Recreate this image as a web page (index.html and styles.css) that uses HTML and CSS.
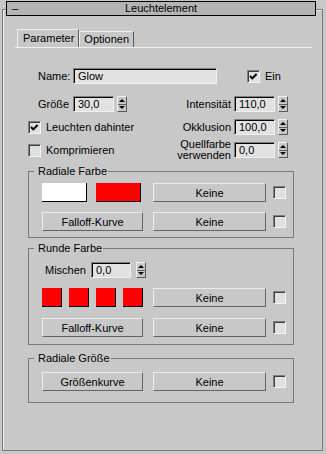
FILE: index.html
```html
<!DOCTYPE html>
<html lang="de">
<head>
<meta charset="UTF-8">
<title>Leuchtelement</title>
<link rel="stylesheet" href="styles.css">
</head>
<body>

<div class="panel">

<div class="titlebar"><span class="minus">–</span><span>Leuchtelement</span><span></span></div>

<div class="tabs">
<div class="tab active">Parameter</div>
<div class="tab">Optionen</div>
</div>

<div class="row r-name">
<span class="lbl">Name:</span>
<span class="field wide">Glow</span>
<span class="check on ein"><svg viewBox="0 0 11 11" width="11" height="11"><path d="M2 5 L4.3 7.4 L8.6 3" stroke="#000" stroke-width="2" fill="none"/></svg></span>
<span class="cap">Ein</span>
</div>

<div class="row r1">
<div class="left">
<span class="lbl">Größe</span>
<span class="field">30,0</span>
<span class="spin"><i class="up"></i><i class="down"></i></span>
</div>
<div class="right">
<span class="rlbl">Intensität</span>
<span class="field">110,0</span>
<span class="spin"><i class="up"></i><i class="down"></i></span>
</div>
</div>

<div class="row r2">
<div class="left chk">
<span class="check on"><svg viewBox="0 0 11 11" width="11" height="11"><path d="M2 5 L4.3 7.4 L8.6 3" stroke="#000" stroke-width="2" fill="none"/></svg></span>
<span class="cap">Leuchten dahinter</span>
</div>
<div class="right">
<span class="rlbl">Okklusion</span>
<span class="field">100,0</span>
<span class="spin"><i class="up"></i><i class="down"></i></span>
</div>
</div>

<div class="row r2">
<div class="left chk">
<span class="check"></span>
<span class="cap">Komprimieren</span>
</div>
<div class="right">
<span class="rlbl">Quellfarbe<br>verwenden</span>
<span class="field">0,0</span>
<span class="spin"><i class="up"></i><i class="down"></i></span>
</div>
</div>

<div class="group g1">
<div class="gtitle">Radiale Farbe</div>
<div class="grow first">
<span class="sw big white"></span>
<span class="sw big"></span>
<span class="btn keine">Keine</span>
<span class="check"></span>
</div>
<div class="grow second">
<span class="btn curve">Falloff-Kurve</span>
<span class="btn keine">Keine</span>
<span class="check"></span>
</div>
</div>

<div class="group g2">
<div class="gtitle">Runde Farbe</div>
<div class="grow mix">
<span class="mlbl">Mischen</span>
<span class="field narrow">0,0</span>
<span class="spin wide-gap"><i class="up"></i><i class="down"></i></span>
</div>
<div class="grow swatches">
<span class="sw"></span>
<span class="sw"></span>
<span class="sw"></span>
<span class="sw"></span>
<span class="btn keine">Keine</span>
<span class="check"></span>
</div>
<div class="grow third">
<span class="btn curve">Falloff-Kurve</span>
<span class="btn keine">Keine</span>
<span class="check"></span>
</div>
</div>

<div class="group g3">
<div class="gtitle">Radiale Größe</div>
<div class="grow size">
<span class="btn curve">Größenkurve</span>
<span class="btn keine">Keine</span>
<span class="check"></span>
</div>
</div>

</div>

</body>
</html>
```

FILE: styles.css
```css
body{margin:0;width:326px;height:454px;overflow:hidden;background:#c8c8c8;font:11px "Liberation Sans",Arial,sans-serif;color:#000}
.panel{margin:9px 3px 0 2px;height:440px;border:1px solid #7a7a7a;box-shadow:inset 1px 1px 0 #ececec}

.titlebar{display:grid;grid-template-columns:1fr auto 1fr;align-items:center;height:15px;box-sizing:border-box;margin:-9px 6px 0 3px;border:1px solid #000;background:#b4b4b4;line-height:13px}
.minus{padding-left:5px}

.tabs{display:flex;align-items:flex-end;margin:13px 10px 0 12px;padding-left:2px;border-bottom:1px solid #f0f0f0}
.tab{height:16px;box-sizing:border-box;padding:0 4px;border:1px solid;border-bottom:0;border-color:#f0f0f0 #5a5a5a #5a5a5a #f0f0f0;line-height:15px}
.tab.active{height:18px;padding:0 4px 0 5px;line-height:17px}

.row{display:flex;align-items:center;height:16px}
.r-name{margin:20px 0 0 35px}
.r1{margin-top:12px}
.r2{margin-top:7px}
.left{display:flex;align-items:center;margin-left:35px}
.left.chk{margin-left:25px}
.right{display:flex;align-items:center;margin-left:auto;margin-right:34px}
.lbl{width:35px}
.rlbl{text-align:right;margin-right:3px;line-height:11px}
.cap{margin-left:5px}

.field{box-sizing:border-box;width:41px;height:16px;padding-left:4px;border:1px solid;border-color:#808080 #f0f0f0 #f0f0f0 #808080;box-shadow:inset 1px 1px 0 #000;background:#e2e2e2;line-height:14px;white-space:nowrap}
.field.wide{width:144px}
.field.narrow{width:40px}

.spin{display:flex;flex-direction:column;box-sizing:border-box;width:10px;height:16px;margin-left:3px;border:1px solid;border-color:#f0f0f0 #5a5a5a #5a5a5a #f0f0f0}
.spin.wide-gap{margin-left:5px}
.spin i{flex:1;display:flex;align-items:center;justify-content:center}
.spin i+i{border-top:1px solid #5a5a5a}
.spin .up::after{content:"";border-left:3px solid transparent;border-right:3px solid transparent;border-bottom:3px solid #000}
.spin .down::after{content:"";border-left:3px solid transparent;border-right:3px solid transparent;border-top:3px solid #000}

.check{display:flex;box-sizing:border-box;width:13px;height:13px;border:1px solid;border-color:#808080 #f4f4f4 #f4f4f4 #808080;box-shadow:inset 1px 1px 0 #404040;background:#e0e0e0}
.check.ein{margin-left:30px}

.group{margin:10px 28px 0 25px;border:1px solid #7a7a7a;padding-bottom:6px}
.g1{margin-top:13px}
.g2{padding-bottom:7px}
.g3{margin-top:13px;padding-bottom:11px}
.gtitle{width:fit-content;margin:-7px 0 0 5px;padding:0 1px 0 4px;background:#c8c8c8;line-height:13px}

.grow{display:flex;align-items:center;margin-left:13px;height:19px}
.grow.first{margin-top:5px}
.grow.second{margin-top:10px}
.grow.mix{margin:7px 0 0 16px;height:16px}
.grow.swatches{margin-top:10px}
.grow.third{margin-top:11px}
.grow.size{margin-top:7px}
.grow .check{margin-left:7px}

.mlbl{margin-right:5px}

.sw{box-sizing:border-box;width:20px;height:19px;margin-right:7px;background:#f00;border-right:1px solid #000;border-bottom:1px solid #000}
.sw.big{width:45px;margin-right:9px}
.sw.white{background:#fff}
.sw + .btn{margin-left:3px}
.sw.big + .btn{margin-left:3px}

.btn{display:flex;align-items:center;justify-content:center;box-sizing:border-box;height:19px;border:1px solid;border-color:#ececec #646464 #646464 #ececec}
.btn.curve{width:101px;margin-right:10px}
.btn.keine{width:113px}
```
